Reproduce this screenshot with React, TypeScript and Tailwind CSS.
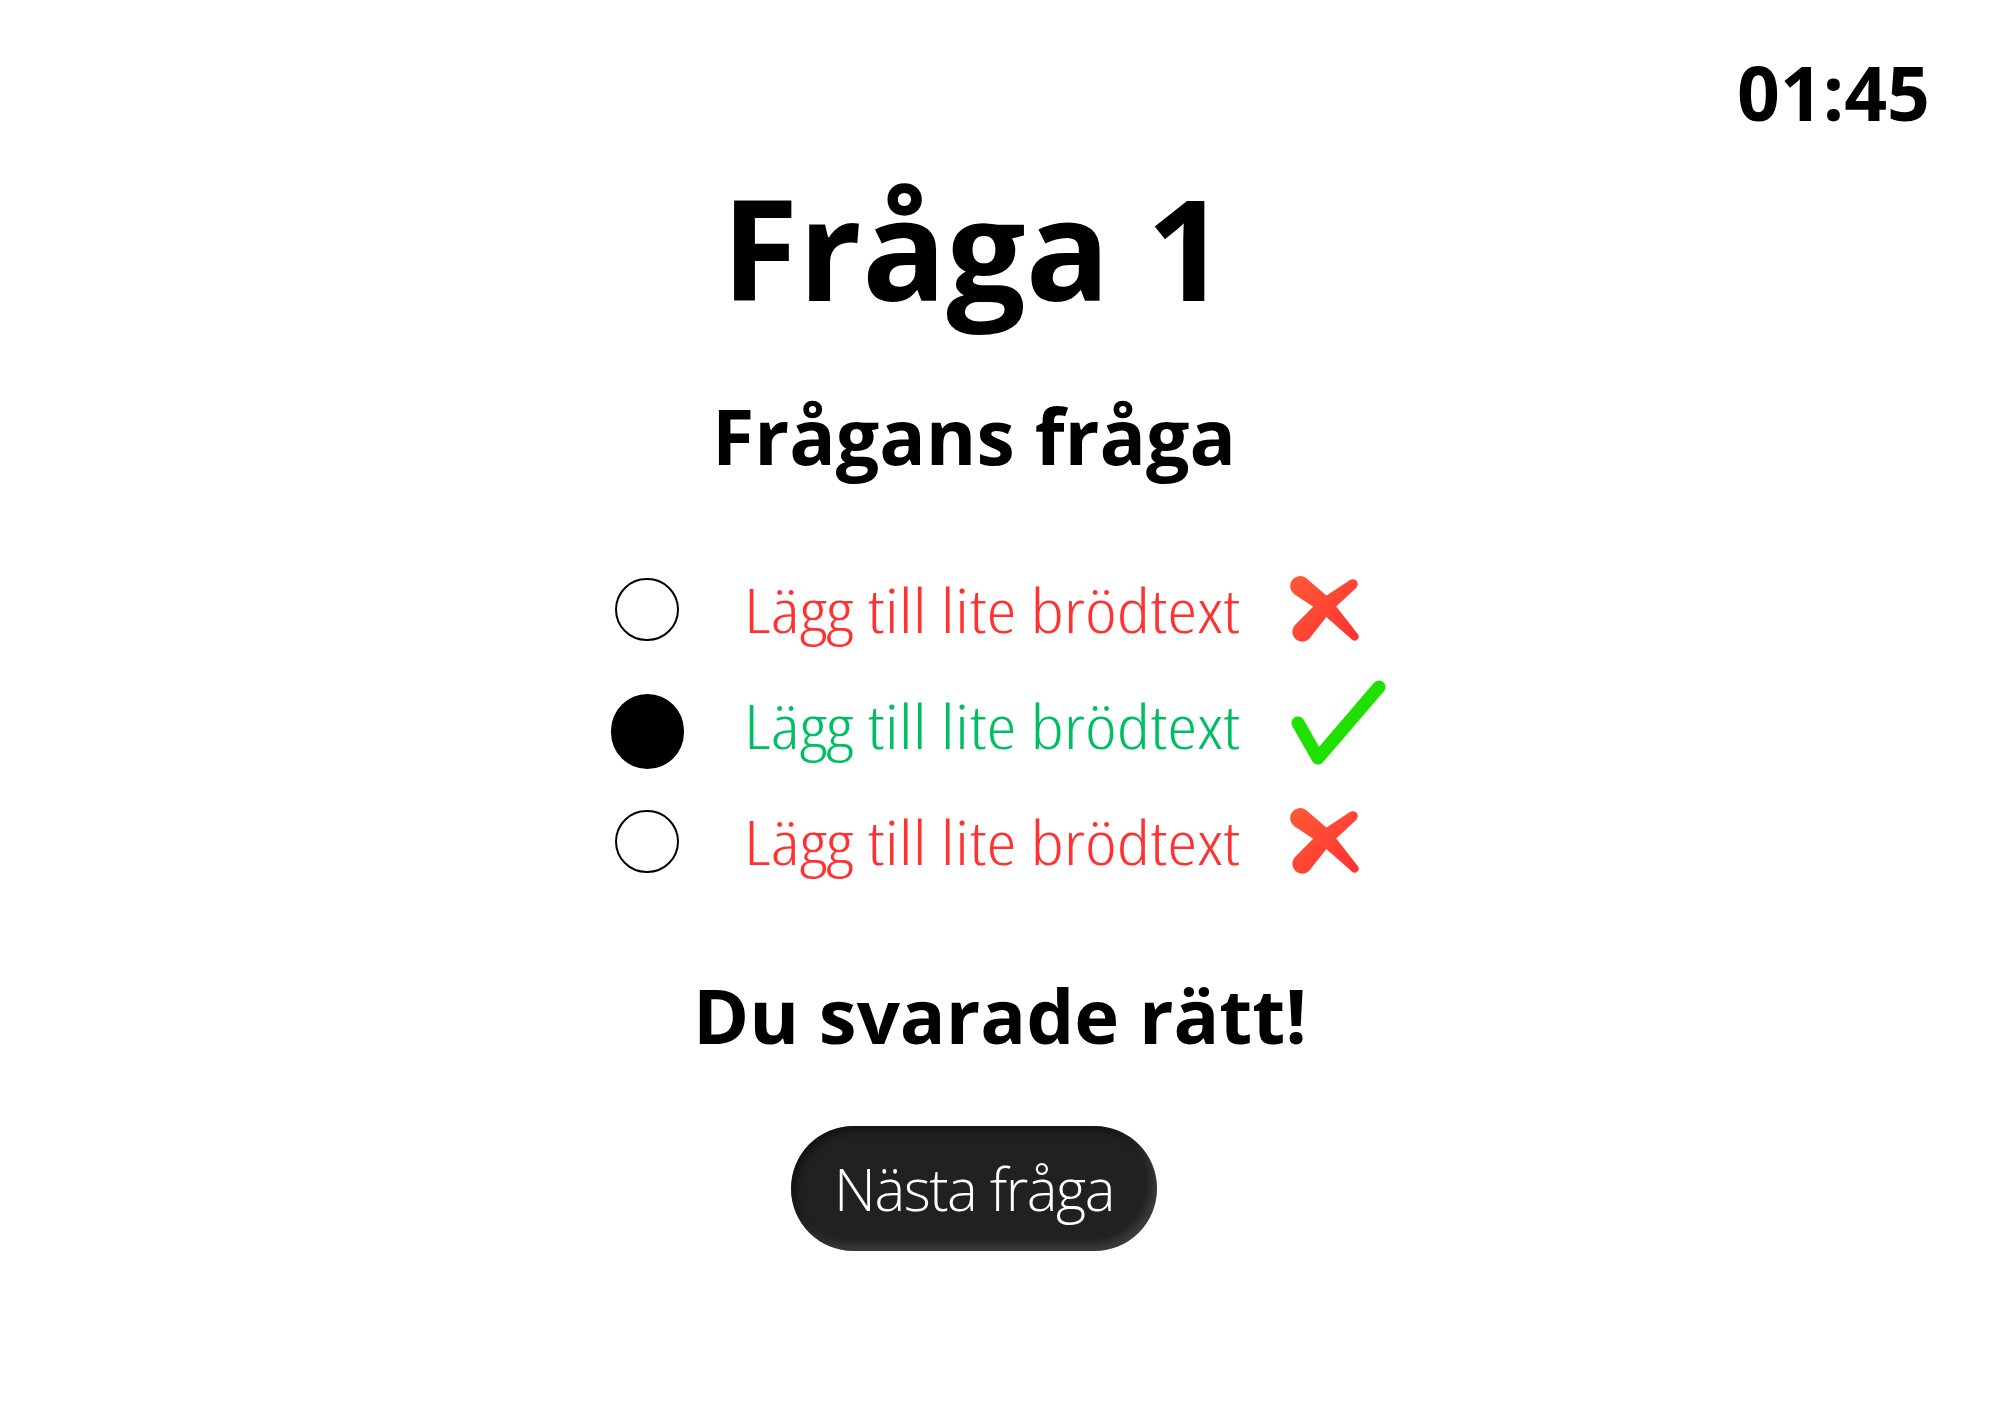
import React from "react";

type Answer = {
  text: string;
  selected: boolean;
  correct: boolean;
};

const answers: Answer[] = [
  { text: "Lägg till lite brödtext", selected: false, correct: false },
  { text: "Lägg till lite brödtext", selected: true, correct: true },
  { text: "Lägg till lite brödtext", selected: false, correct: false },
];

const CrossIcon = ({ id }: { id: string }) => (
  <svg width="72" height="68" viewBox="0 0 72 68">
    <defs>
      <linearGradient id={id} x1="0" y1="0" x2="1" y2="1">
        <stop offset="0" stopColor="#ff5a36" />
        <stop offset="1" stopColor="#ff3131" />
      </linearGradient>
    </defs>
    <path
      d="M16.05,3.04 L40.4,24.1 L67.9,59.3 A4,4 0 0 1 62.1,64.7 L29.6,35.9 L3.95,18.96 A10,10 0 0 1 16.05,3.04 Z"
      fill={`url(#${id})`}
    />
    <path
      d="M59.9,5.07 L29.5,25.2 L4.5,50.4 A10,10 0 0 0 19.5,63.6 L40.5,36.8 L66.1,12.9 A5,5 0 0 0 59.9,5.07 Z"
      fill={`url(#${id})`}
    />
  </svg>
);

const CheckIcon = () => (
  <svg width="100" height="95" viewBox="0 0 100 95">
    <path
      d="M8,45 L28,80 L89,9"
      fill="none"
      stroke="#1fe000"
      strokeWidth="13"
      strokeLinecap="round"
      strokeLinejoin="round"
    />
  </svg>
);

const Radio = ({ selected }: { selected: boolean }) =>
  selected ? (
    <div className="w-[73px] h-[75px] rounded-full bg-black mt-[12px]" />
  ) : (
    <div className="w-[64px] h-[63px] rounded-full border-2 border-black" />
  );

export default function App() {
  return (
    <div className="min-h-[1414px] w-full bg-white font-['Open_Sans',sans-serif] text-black">
      <div className="flex justify-end pt-[55px] pr-[70px]">
        <div className="text-[75px] leading-none font-bold">01:45</div>
      </div>

      <div className="flex flex-col items-center">
        <h1 className="mt-[47px] mr-[52px] text-[140px] leading-none font-bold">
          Fråga 1
        </h1>
        <h2 className="mt-[80px] mr-[52px] text-[77px] leading-none font-bold">
          Frågans fråga
        </h2>

        <div className="mt-[77px] flex flex-col">
          {answers.map((a, i) => (
            <div key={i} className="flex items-center h-[116px]">
              <div className="w-[74px] flex justify-center">
                <Radio selected={a.selected} />
              </div>
              <div className="ml-[60px] w-[495px] whitespace-nowrap">
                <span
                  className={`inline-block origin-left scale-x-[1.245] text-[61px] leading-none font-light [font-stretch:75%] ${
                    a.correct ? "text-[#00bf63]" : "text-[#ff3131]"
                  }`}
                >
                  {a.text}
                </span>
              </div>
              <div className="ml-[51px] w-[100px] flex items-center">
                {a.correct ? <CheckIcon /> : <CrossIcon id={`xg${i}`} />}
              </div>
            </div>
          ))}
        </div>

        <div className="mt-[78px] text-[76px] leading-none font-bold">
          Du svarade rätt!
        </div>

        <button className="mt-[73px] mr-[52px] w-[366px] h-[125px] rounded-full bg-[#212123] text-white text-[58px] leading-none font-light tracking-[-1.5px] shadow-[inset_-5px_-6px_8px_rgba(255,255,255,0.13),inset_4px_4px_8px_rgba(0,0,0,0.5)]">
          Nästa fråga
        </button>
      </div>
    </div>
  );
}
